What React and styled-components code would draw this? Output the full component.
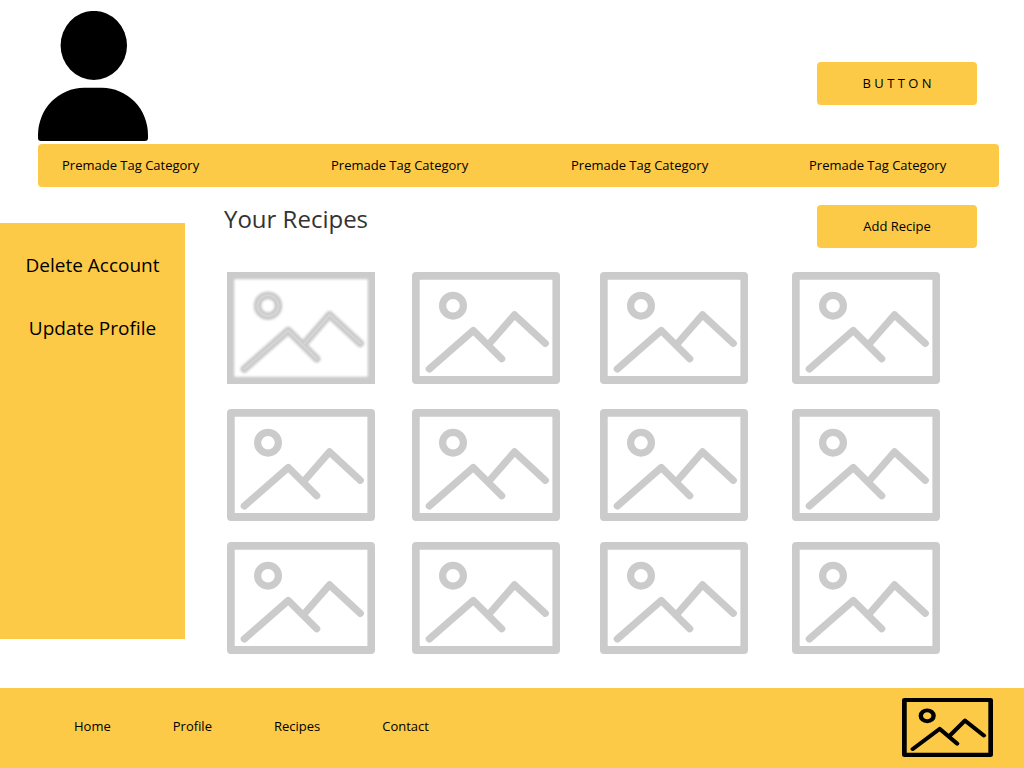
import React from "react";
import styled, { createGlobalStyle } from "styled-components";

const YELLOW = "#fcca46";

const GlobalStyle = createGlobalStyle`
  *, *::before, *::after { box-sizing: border-box; }
  body {
    margin: 0;
    background: #fff;
    color: #000;
    font-family: "Open Sans", "Noto Sans", sans-serif;
    font-size: 13px;
    line-height: 18px;
  }
`;

const Page = styled.div`
  min-height: 100vh;
  display: flex;
  flex-direction: column;
`;

const Header = styled.header`
  display: flex;
  justify-content: space-between;
  align-items: flex-start;
  padding: 11px 47px 3px 38px;
`;

const Avatar = styled.svg`
  display: block;
  width: 110px;
  height: 130px;
`;

const Button = styled.button`
  width: 160px;
  height: 43px;
  padding: 0 0 2px;
  border: 0;
  border-radius: 4px;
  background: ${YELLOW};
  color: #000;
  font: inherit;
  white-space: pre;
  cursor: pointer;
`;

const HeaderAction = styled.div`
  padding-top: 51px;
`;

const TagBar = styled.nav`
  display: grid;
  grid-template-columns: 269fr 240fr 238fr 190fr;
  align-items: center;
  min-height: 43px;
  margin: 0 25px 0 38px;
  padding: 0 0 2px 24px;
  border-radius: 4px;
  background: ${YELLOW};
`;

const TextLink = styled.a`
  color: #000;
  text-decoration: none;
`;

const Body = styled.div`
  flex: 1;
  display: flex;
  align-items: stretch;
`;

const Sidebar = styled.aside`
  flex: none;
  display: flex;
  flex-direction: column;
  align-items: center;
  gap: 37px;
  width: 185px;
  margin: 36px 0 49px;
  padding-top: 29px;
  background: ${YELLOW};
`;

const SidebarButton = styled.button`
  padding: 0;
  border: 0;
  background: none;
  color: #000;
  font: inherit;
  font-size: 19px;
  line-height: 26px;
  cursor: pointer;
`;

const Content = styled.main`
  flex: 1;
  padding: 18px 0 34px 39px;
`;

const ContentHeader = styled.div`
  display: flex;
  justify-content: space-between;
  align-items: flex-start;
  padding-right: 47px;
`;

const Title = styled.h1`
  margin: 0;
  color: #333;
  font-size: 24px;
  font-weight: 400;
  line-height: 28px;
`;

const RecipeGrid = styled.ul`
  display: grid;
  grid-template-columns: 185fr 188fr 192fr 232fr;
  grid-template-rows: 137px 133px 112px;
  margin: 24px 0 0;
  padding: 0 0 0 3px;
  list-style: none;
`;

const Picture = styled.svg`
  display: block;
  width: ${(p) => p.$width}px;
  height: ${(p) => p.$height}px;
  color: ${(p) => p.$color};
  overflow: hidden;
`;

const Footer = styled.footer`
  display: flex;
  justify-content: space-between;
  align-items: center;
  min-height: 80px;
  padding: 0 31px 2px 74px;
  background: ${YELLOW};
`;

const FooterNav = styled.nav`
  display: flex;
  gap: 62px;
  padding-bottom: 2px;
`;

function PictureShapes({ width = 7.2, color = "currentColor" }) {
  return (
    <g fill="none" stroke={color} strokeWidth={width} strokeLinecap="round" strokeLinejoin="round">
      <circle cx="41" cy="33.7" r="10.4" />
      <path d="M17.3 97 61.3 58.5 89.7 86.7" />
      <path d="M77.5 71.5 102.5 42.8 133.3 71.3" />
    </g>
  );
}

function PictureIcon({ width = 148, height = 112, color = "#cbcbcb", soft = false, label }) {
  return (
    <Picture
      $width={width}
      $height={height}
      $color={color}
      viewBox="0 0 148 112"
      preserveAspectRatio="none"
      role="img"
      aria-label={label}
    >
      {soft ? (
        <>
          <defs>
            <filter id="soft" x="-10%" y="-10%" width="120%" height="120%">
              <feGaussianBlur stdDeviation="0.9" />
            </filter>
            <filter id="core" x="-10%" y="-10%" width="120%" height="120%">
              <feGaussianBlur stdDeviation="0.6" />
            </filter>
          </defs>
          <g filter="url(#soft)">
            <path fill="currentColor" fillRule="evenodd" d="M-6-6H154V118H-6ZM7.3 7.3V104.7H140.7V7.3Z" />
            <PictureShapes width={7.8} />
          </g>
          <g filter="url(#core)">
            <PictureShapes width={2} color="#d5d5d5" />
          </g>
        </>
      ) : (
        <>
          <path
            fill="currentColor"
            fillRule="evenodd"
            d="M4 0H144a4 4 0 0 1 4 4V108a4 4 0 0 1-4 4H4a4 4 0 0 1-4-4V4a4 4 0 0 1 4-4ZM7.7 7.7V104.1H140.4V7.7Z"
          />
          <PictureShapes />
        </>
      )}
    </Picture>
  );
}

const tags = [1, 2, 3, 4];
const recipes = Array.from({ length: 12 }, (_, i) => i + 1);
const links = ["Home", "Profile", "Recipes", "Contact"];

export default function App() {
  return (
    <Page>
      <GlobalStyle />
      <Header>
        <Avatar viewBox="0 0 110 130" role="img" aria-label="User">
          <ellipse cx="55.8" cy="34.4" rx="33.2" ry="34.5" />
          <path d="M0 127V124A46 47.2 0 0 1 46 76.8H64A46 47.2 0 0 1 110 124V127Q110 130 107 130H3Q0 130 0 127Z" />
        </Avatar>
        <HeaderAction>
          <Button type="button">B U T T O N</Button>
        </HeaderAction>
      </Header>
      <TagBar aria-label="Tags">
        {tags.map((tag) => (
          <TextLink href="#" key={tag}>Premade Tag Category</TextLink>
        ))}
      </TagBar>
      <Body>
        <Sidebar>
          <SidebarButton type="button">Delete Account</SidebarButton>
          <SidebarButton type="button">Update Profile</SidebarButton>
        </Sidebar>
        <Content>
          <ContentHeader>
            <Title>Your Recipes</Title>
            <Button type="button">Add Recipe</Button>
          </ContentHeader>
          <RecipeGrid>
            {recipes.map((id) => (
              <li key={id}>
                <PictureIcon soft={id === 1} label={`Recipe ${id}`} />
              </li>
            ))}
          </RecipeGrid>
        </Content>
      </Body>
      <Footer>
        <FooterNav aria-label="Footer">
          {links.map((link) => (
            <TextLink href="#" key={link}>{link}</TextLink>
          ))}
        </FooterNav>
        <PictureIcon width={91} height={59} color="#000" label="Logo" />
      </Footer>
    </Page>
  );
}
